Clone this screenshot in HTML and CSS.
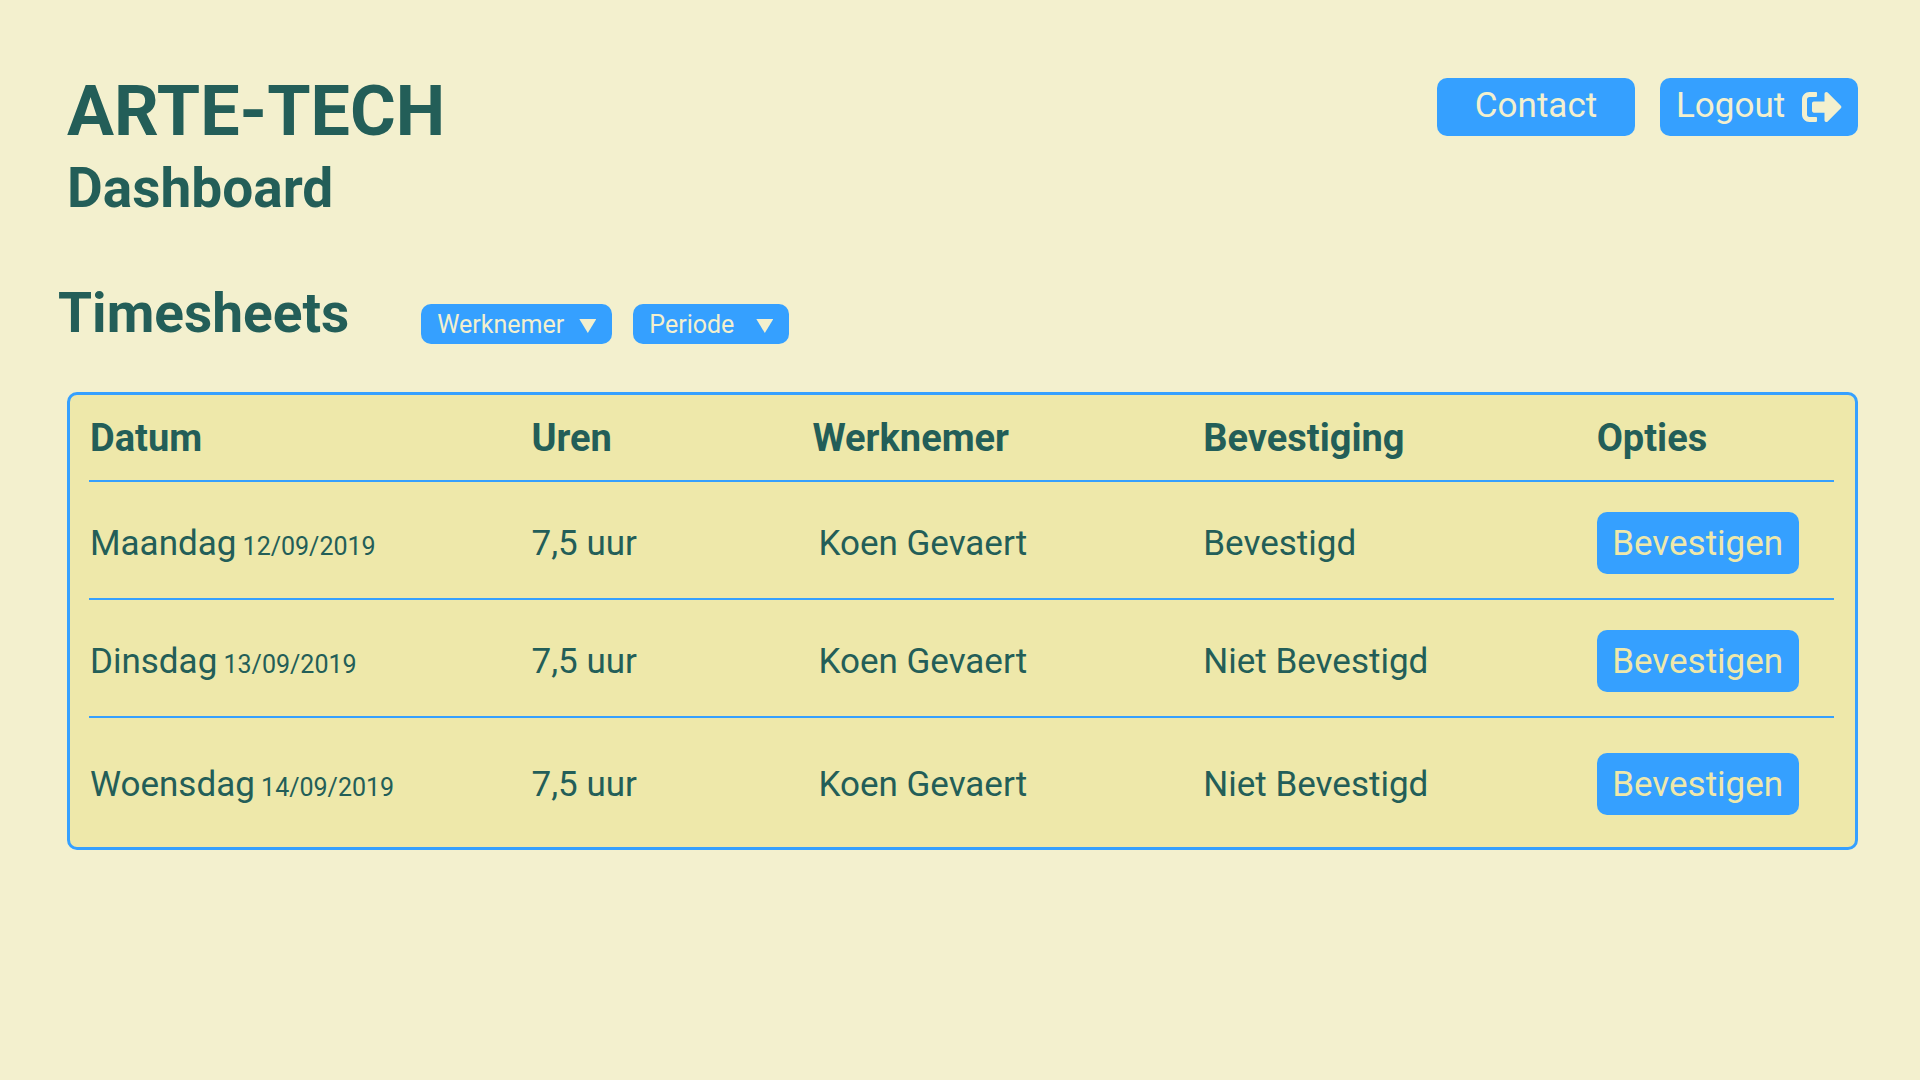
FILE: index.html
```html
<!DOCTYPE html>
<html lang="nl">
<head>
  <meta charset="utf-8">
  <meta name="viewport" content="width=device-width, initial-scale=1">
  <title>ARTE-TECH Dashboard</title>
  <link rel="stylesheet" href="styles.css">
</head>
<body>
  <header class="page-header">
    <div class="brand">
      <h1 class="brand-name">ARTE-TECH</h1>
      <h2 class="heading">Dashboard</h2>
    </div>
    <nav class="actions">
      <a class="nav-button" href="#contact">Contact</a>
      <button class="nav-button nav-button-icon" type="button">
        <span class="nav-label">Logout</span>
        <svg class="icon" viewBox="0 0 512 512" aria-hidden="true"><path d="M497 273L329 441c-15 15-41 4.500-41-17v-96H152c-13.300 0-24-10.700-24-24v-96c0-13.300 10.700-24 24-24h136V88c0-21.400 25.900-32 41-17l168 168c9.300 9.400 9.300 24.600 0 34zM192 436v-40c0-6.600-5.400-12-12-12H96c-17.700 0-32-14.300-32-32V160c0-17.700 14.300-32 32-32h84c6.600 0 12-5.400 12-12V76c0-6.600-5.400-12-12-12H96c-53 0-96 43-96 96v192c0 53 43 96 96 96h84c6.600 0 12-5.400 12-12z"/></svg>
      </button>
    </nav>
  </header>

  <main>
    <div class="toolbar">
      <h2 class="heading">Timesheets</h2>
      <div class="filters">
        <div class="filter filter-employee">
          <select class="filter-select" aria-label="Werknemer">
            <option>Werknemer</option>
          </select>
        </div>
        <div class="filter filter-period">
          <select class="filter-select" aria-label="Periode">
            <option>Periode</option>
          </select>
        </div>
      </div>
    </div>

    <div class="card">
      <table class="timesheets">
        <colgroup>
          <col class="col-date">
          <col class="col-hours">
          <col class="col-employee">
          <col class="col-status">
          <col>
        </colgroup>
        <thead>
          <tr>
            <th scope="col">Datum</th>
            <th scope="col">Uren</th>
            <th scope="col">Werknemer</th>
            <th scope="col">Bevestiging</th>
            <th scope="col">Opties</th>
          </tr>
        </thead>
        <tbody>
          <tr>
            <td>Maandag<time class="date" datetime="2019-09-12"> 12/09/2019</time></td>
            <td>7,5 uur</td>
            <td class="employee">Koen Gevaert</td>
            <td>Bevestigd</td>
            <td><button class="confirm" type="button">Bevestigen</button></td>
          </tr>
          <tr>
            <td>Dinsdag<time class="date" datetime="2019-09-13"> 13/09/2019</time></td>
            <td>7,5 uur</td>
            <td class="employee">Koen Gevaert</td>
            <td>Niet Bevestigd</td>
            <td><button class="confirm" type="button">Bevestigen</button></td>
          </tr>
          <tr>
            <td>Woensdag<time class="date" datetime="2019-09-14"> 14/09/2019</time></td>
            <td>7,5 uur</td>
            <td class="employee">Koen Gevaert</td>
            <td>Niet Bevestigd</td>
            <td><button class="confirm" type="button">Bevestigen</button></td>
          </tr>
        </tbody>
      </table>
    </div>
  </main>
</body>
</html>
```
FILE: styles.css
```css
:root {
  --page: #f3f0ce;
  --panel: #eee8aa;
  --accent: #35a0ff;
  --ink: #235e58;
}

* {
  box-sizing: border-box;
}

body {
  margin: 0;
  padding: 70px 62px 70px 67px;
  background: var(--page);
  color: var(--ink);
  font-family: Roboto, "Liberation Sans", sans-serif;
  font-size: 35px;
  line-height: 42px;
}

h1,
h2 {
  margin: 0;
  font-weight: 700;
}

button,
select {
  border: 0;
  font: inherit;
  cursor: pointer;
}

/* Header */
.page-header {
  display: flex;
  justify-content: space-between;
  align-items: flex-start;
}

.brand {
  display: flex;
  flex-direction: column;
  gap: 4px;
}

.brand-name {
  font-size: 70px;
  line-height: 82px;
}

.heading {
  font-size: 55px;
  line-height: 64px;
}

.actions {
  display: flex;
  gap: 25px;
  padding-top: 8px;
}

.nav-button {
  display: flex;
  align-items: center;
  justify-content: center;
  width: 198px;
  height: 58px;
  padding: 0 16px 2px;
  border-radius: 10px;
  background: var(--accent);
  color: var(--page);
  text-decoration: none;
}

.nav-button-icon {
  justify-content: space-between;
  padding-bottom: 0;
}

.nav-label {
  padding-bottom: 2px;
}

.icon {
  width: 40px;
  height: 40px;
  fill: currentColor;
}

/* Section title and filters */
.toolbar {
  display: flex;
  align-items: flex-end;
  gap: 72px;
  margin: 61px 0 47px -9px;
}

.filters {
  display: flex;
  gap: 21px;
  padding-bottom: 1px;
}

.filter {
  position: relative;
}

.filter-employee {
  width: 191px;
}

.filter-period {
  width: 156px;
}

.filter-select {
  display: block;
  width: 100%;
  height: 40px;
  padding: 2px 16px 0;
  appearance: none;
  border-radius: 10px;
  background: var(--accent);
  color: var(--page);
  font-size: 25px;
  line-height: 30px;
}

.filter::after {
  content: "";
  position: absolute;
  top: 15px;
  right: 16px;
  width: 17px;
  height: 14px;
  background: var(--page);
  clip-path: polygon(0 0, 100% 0, 50% 100%);
  pointer-events: none;
}

/* Timesheet table */
.card {
  padding: 0 21px 0 19px;
  border: 3px solid var(--accent);
  border-radius: 10px;
  background: var(--panel);
}

.timesheets {
  width: 100%;
  table-layout: fixed;
  border-spacing: 0;
}

.col-date {
  width: 25.3%;
}

.col-hours {
  width: 16.1%;
}

.col-employee {
  width: 22.4%;
}

.col-status {
  width: 22.6%;
}

th {
  padding: 21px 0 20px 1px;
  border-bottom: 2px solid var(--accent);
  font-size: 38px;
  font-weight: 700;
  line-height: 44px;
  text-align: left;
}

td {
  padding: 30px 0 24px 1px;
  border-bottom: 2px solid var(--accent);
  vertical-align: baseline;
}

th:last-child,
td:last-child {
  padding-left: 0;
}

tbody tr:last-child td {
  padding-top: 35px;
  padding-bottom: 32px;
  border-bottom: 0;
}

.timesheets .employee {
  padding-left: 7px;
}

.date {
  font-size: 25px;
}

.confirm {
  display: block;
  width: 202px;
  height: 62px;
  padding: 2px 0 0;
  border-radius: 10px;
  background: var(--accent);
  color: var(--panel);
}
```
